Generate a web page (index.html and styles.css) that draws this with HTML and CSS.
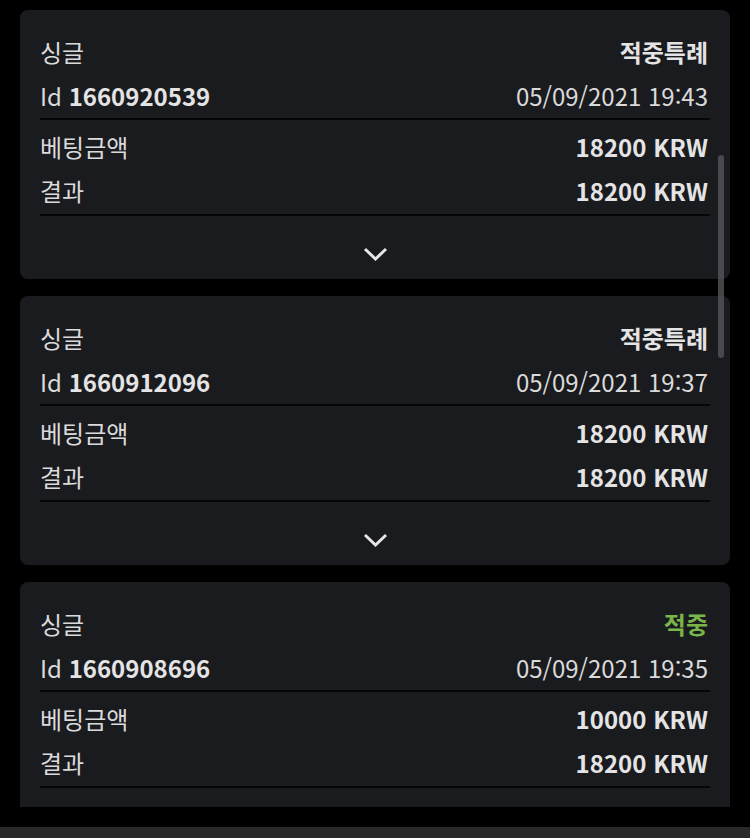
FILE: index.html
```html
<!DOCTYPE html>
<html lang="ko">
<head>
    <meta charset="UTF-8">
    <title>베팅 내역</title>
    <link rel="stylesheet" href="styles.css">
</head>
<body>

<div class="history">
    <div class="bet-card">
        <div class="bet-head">
            <div class="row"><span>싱글</span><strong>적중특례</strong></div>
            <div class="row"><span>Id <strong>1660920539</strong></span><span>05/09/2021 19:43</span></div>
        </div>
        <div class="bet-body">
            <div class="row"><span>베팅금액</span><strong>18200 KRW</strong></div>
            <div class="row"><span>결과</span><strong>18200 KRW</strong></div>
        </div>
        <div class="bet-toggle">
            <svg width="25" height="14" viewBox="0 0 25 14"><polyline points="2,2 12.5,12 23,2" /></svg>
        </div>
    </div>

    <div class="bet-card">
        <div class="bet-head">
            <div class="row"><span>싱글</span><strong>적중특례</strong></div>
            <div class="row"><span>Id <strong>1660912096</strong></span><span>05/09/2021 19:37</span></div>
        </div>
        <div class="bet-body">
            <div class="row"><span>베팅금액</span><strong>18200 KRW</strong></div>
            <div class="row"><span>결과</span><strong>18200 KRW</strong></div>
        </div>
        <div class="bet-toggle">
            <svg width="25" height="14" viewBox="0 0 25 14"><polyline points="2,2 12.5,12 23,2" /></svg>
        </div>
    </div>

    <div class="bet-card">
        <div class="bet-head">
            <div class="row"><span>싱글</span><strong class="win">적중</strong></div>
            <div class="row"><span>Id <strong>1660908696</strong></span><span>05/09/2021 19:35</span></div>
        </div>
        <div class="bet-body">
            <div class="row"><span>베팅금액</span><strong>10000 KRW</strong></div>
            <div class="row"><span>결과</span><strong>18200 KRW</strong></div>
        </div>
        <div class="bet-toggle">
            <svg width="25" height="14" viewBox="0 0 25 14"><polyline points="2,2 12.5,12 23,2" /></svg>
        </div>
    </div>

    <div class="scroll-thumb"></div>
</div>

<div class="bottom-bar"></div>

</body>
</html>
```

FILE: styles.css
```css
body {
    margin: 0;
    padding: 0;
    background: #000;
    color: #dadada;
    font-family: "Noto Sans CJK KR", "Noto Sans", sans-serif;
    font-size: 24px;
}

.history {
    position: relative;
    height: 807px;
    overflow: hidden;
    padding: 10px 20px 0;
    box-sizing: border-box;
    display: flex;
    flex-direction: column;
    gap: 17px;
}

.bet-card {
    flex-shrink: 0;
    background: #1a1b1f;
    border-radius: 8px;
    padding: 19px 20px 0;
}

.row {
    display: flex;
    justify-content: space-between;
    align-items: center;
    height: 44px;
    padding-right: 2px;
    white-space: nowrap;
}

.row strong {
    font-weight: 700;
    color: #e4e4e4;
}

.row strong.win {
    color: #79b548;
}

.bet-head {
    padding-bottom: 1px;
    border-bottom: 2px solid #050505;
}

.bet-body {
    padding: 5px 0 2px;
    border-bottom: 2px solid #050505;
}

.bet-body .row:first-child {
    height: 43px;
}

.bet-toggle {
    display: flex;
    justify-content: center;
    padding: 31px 0 18px;
}

.bet-toggle svg {
    display: block;
    fill: none;
    stroke: #e6e6e6;
    stroke-width: 3;
}

.scroll-thumb {
    position: absolute;
    left: 718px;
    top: 155px;
    width: 6px;
    height: 203px;
    border-radius: 3px;
    background: rgba(90, 91, 96, 0.75);
}

.bottom-bar {
    margin-top: 20px;
    height: 11px;
    background: #292929;
}
```
